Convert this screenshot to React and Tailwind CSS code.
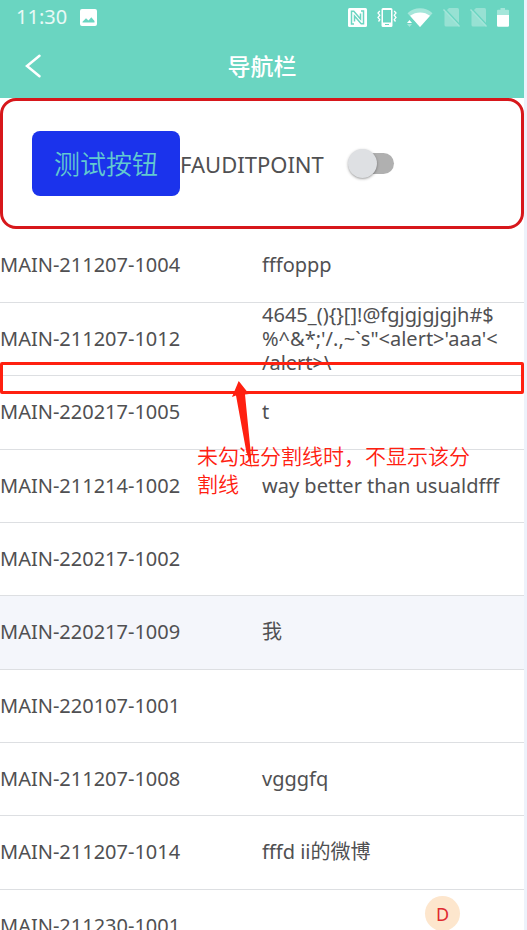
import React, { useState } from "react";

const records = [
  { code: "MAIN-211207-1004", text: "fffoppp" },
  {
    code: "MAIN-211207-1012",
    text: "4645_(){}[]!@fgjgjgjgjh#$%^&*;'/.,~`s\"<alert>'aaa'</alert>\\",
  },
  { code: "MAIN-220217-1005", text: "t" },
  { code: "MAIN-211214-1002", text: "way better than usualdfff" },
  { code: "MAIN-220217-1002", text: "" },
  { code: "MAIN-220217-1009", text: "我", active: true },
  { code: "MAIN-220107-1001", text: "" },
  { code: "MAIN-211207-1008", text: "vgggfq" },
  { code: "MAIN-211207-1014", text: "fffd ii的微博" },
  { code: "MAIN-211230-1001", text: "" },
];

const ImageIcon = () => (
  <svg width="17" height="17" viewBox="0 0 17 17" aria-hidden="true">
    <path
      fill="#fff"
      fillRule="evenodd"
      d="M2 0h13a2 2 0 0 1 2 2v13a2 2 0 0 1-2 2H2a2 2 0 0 1-2-2V2a2 2 0 0 1 2-2zM2.500 13.500h12V12l-3.200-3.800-2.800 3.200-2.500-2.200-3.500 3.600z"
    />
  </svg>
);

const NfcIcon = () => (
  <svg width="19" height="19" viewBox="0 0 19 19" aria-hidden="true">
    <rect width="19" height="19" rx="1.500" fill="#fff" />
    <path
      d="M6 16H3.500V3.200h2.300l6.700 7.800V5.500M13 3h2.500v12.800h-2.300L6.500 8v5.500"
      fill="none"
      stroke="#6ad5c1"
      strokeWidth="1.500"
    />
  </svg>
);

const VibrateIcon = () => (
  <svg width="20" height="19" viewBox="0 0 20 19" aria-hidden="true">
    <path
      fill="#fff"
      fillRule="evenodd"
      d="M6 0h8a1.500 1.500 0 0 1 1.500 1.500v16A1.500 1.500 0 0 1 14 19H6a1.500 1.500 0 0 1-1.500-1.500v-16A1.500 1.500 0 0 1 6 0zM6 2v12.500h8V2zM8 16v1h4v-1z"
    />
    <path
      d="M2.800 3L1 5l1.800 2.200L1 9.500l1.800 2.200L1.500 13.500M17.200 3L19 5l-1.800 2.200L19 9.500l-1.800 2.200 1.300 1.800"
      fill="none"
      stroke="#fff"
      strokeWidth="1.300"
    />
  </svg>
);

const WifiIcon = () => (
  <svg width="26" height="19" viewBox="0 0 26 19" aria-hidden="true">
    <path d="M0.500 5.200C7-1.500 19-1.500 25.500 5.200L13 19z" fill="#fff" opacity="0.400" />
    <path d="M0 8.500h3.500L9 15v4H0z" fill="#6ad5c1" />
    <path d="M3 7.800C9 3.300 17.500 3.300 23 7.800L13 19z" fill="#fff" />
    <path d="M0 15l2.500-3 2.500 3z" fill="#fff" />
    <path d="M0 16l2.500 3L5 16z" fill="#fff" opacity="0.400" />
  </svg>
);

const NoSimIcon = () => (
  <svg width="17" height="19" viewBox="0 0 17 19" aria-hidden="true">
    <path
      d="M6 0h8.500a1.500 1.500 0 0 1 1.500 1.500v15.500a1.500 1.500 0 0 1-1.500 1.500H3A1.500 1.500 0 0 1 1.500 17V4.500z"
      fill="#97e1d3"
    />
    <path d="M2 1L17 17" stroke="#6ad5c1" strokeWidth="1.500" />
    <path d="M0.500 1.500L16.500 18.500" stroke="#a3e5d9" strokeWidth="1.300" />
  </svg>
);

const BatteryIcon = () => (
  <svg width="12" height="19" viewBox="0 0 12 19" aria-hidden="true">
    <path d="M3.500 0h4.500v1.800h3a1 1 0 0 1 1 1V7H0V2.800a1 1 0 0 1 1-1h2.500z" fill="#fff" opacity="0.400" />
    <path d="M0 7h12v10.500a1.200 1.200 0 0 1-1.200 1.200H1.200A1.200 1.200 0 0 1 0 17.500z" fill="#fff" />
  </svg>
);

const StatusBar = () => (
  <div className="flex h-[34px] items-center justify-between pl-4 pr-[15px]">
    <div className="flex items-center gap-[13px]">
      <span className="text-xl leading-6 text-white/85">11:30</span>
      <ImageIcon />
    </div>
    <div className="flex items-center gap-[10px]">
      <NfcIcon />
      <VibrateIcon />
      <WifiIcon />
      <NoSimIcon />
      <NoSimIcon />
      <BatteryIcon />
    </div>
  </div>
);

const NavBar = () => (
  <div className="grid h-16 grid-cols-[1fr_auto_1fr] items-center">
    <button type="button" aria-label="返回" className="justify-self-start pl-6">
      <svg width="18" height="24" viewBox="0 0 18 24" fill="none" aria-hidden="true">
        <path d="M15.500 1.800L3 12l12.500 10.200" stroke="#fff" strokeWidth="2.500" strokeLinecap="round" />
      </svg>
    </button>
    <h1 className="text-[23px] leading-8 font-medium text-white">导航栏</h1>
  </div>
);

const Toolbar = () => {
  const [checked, setChecked] = useState(false);

  return (
    <div className="flex items-center rounded-2xl border-3 border-[#d7171b] px-[29px] py-[30px]">
      <button
        type="button"
        className="h-[65px] rounded-lg bg-[#1b33ec] px-[22px] text-[26px] leading-8 font-[350] text-[#62c9cf]"
      >
        测试按钮
      </button>
      <label htmlFor="auditPoint" className="text-[22px] leading-8">
        FAUDITPOINT
      </label>
      <input
        id="auditPoint"
        type="checkbox"
        role="switch"
        checked={checked}
        onChange={(e) => setChecked(e.target.checked)}
        className="ml-7 flex h-[21px] w-[42px] appearance-none items-center rounded-full bg-[#b0b0b0] before:-ml-1 before:size-[29px] before:shrink-0 before:rounded-full before:bg-[#dee0e3] before:shadow-sm before:shadow-black/30 checked:bg-[#6ad5c1] checked:before:ml-[17px]"
      />
    </div>
  );
};

const RecordTable = () => (
  <table className="h-[734px] w-full table-fixed border-collapse text-xl leading-6">
    <tbody>
      {records.map((record) => (
        <tr
          key={record.code}
          className={
            record.active
              ? "h-[73px] border-b border-[#dddfe2] bg-[#f4f6fb]"
              : "h-[73px] border-b border-[#dddfe2]"
          }
        >
          <td className="p-0 align-middle">{record.code}</td>
          <td className="p-0 pr-5 align-middle [line-break:anywhere]">{record.text}</td>
        </tr>
      ))}
    </tbody>
  </table>
);

// Review mark drawn over the second divider
const Annotation = () => (
  <div className="pointer-events-none absolute inset-x-0 top-[362px] text-[#ff2010]">
    <div className="h-8 rounded-xs border-3 border-[#ff2010]" />
    <svg
      className="absolute top-[18px] left-[230px]"
      width="26"
      height="90"
      viewBox="0 0 26 90"
      fill="#ff2010"
      aria-hidden="true"
    >
      <path d="M8.700 1L19 14l-4 .5L20.500 70 21.500 88 16 70 6 15.500 2 17z" />
    </svg>
    <p className="absolute top-20 left-[197px] w-[280px] text-[21px] leading-7 font-[350]">
      未勾选分割线时，不显示该分割线
    </p>
  </div>
);

const App = () => {
  return (
    <div className="h-screen overflow-hidden bg-[#edf2fb] pr-[3px] font-['Noto_Sans','Noto_Sans_CJK_SC',sans-serif] text-[#505052]">
      <div className="relative h-full overflow-hidden bg-white">
        <header className="bg-[#6ad5c1]">
          <StatusBar />
          <NavBar />
        </header>
        <main>
          <Toolbar />
          <RecordTable />
        </main>
        <Annotation />
        <button
          type="button"
          className="absolute right-16 -bottom-px size-[35px] rounded-full bg-[#fde6cd] text-lg text-[#e02a30]"
        >
          D
        </button>
      </div>
    </div>
  );
};

export default App;
